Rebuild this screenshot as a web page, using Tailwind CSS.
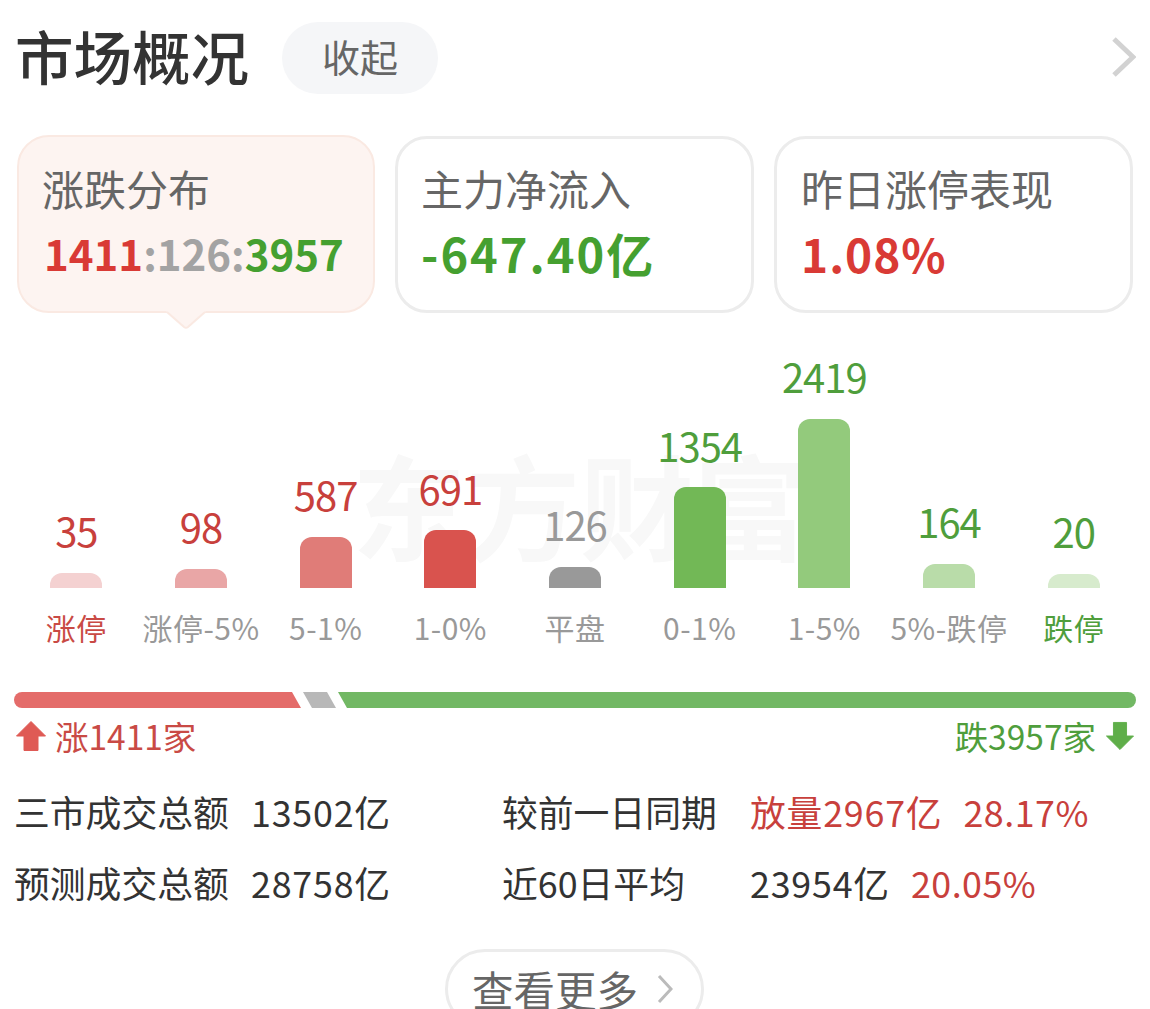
<!DOCTYPE html>
<html lang="zh-CN">
<head>
    <meta charset="UTF-8">
    <meta name="viewport" content="width=device-width, initial-scale=1.0">
    <title>市场概况</title>
    <script src="https://cdn.jsdelivr.net/npm/@tailwindcss/browser@4"></script>
</head>
<body class="font-['Noto_Sans_CJK_SC',sans-serif] bg-white">
<main class="h-[1009px] w-[1150px] overflow-hidden">

    <!-- Header -->
    <header class="flex items-center h-[72px] mt-[22px] pl-[15px] pr-[14px]">
        <h1 class="text-[58.5px] leading-[72px] font-medium text-[#333] mb-[6px]">市场概况</h1>
        <button class="ml-[33px] w-[156px] h-[72px] pb-[4px] rounded-[36px] bg-[#f5f6f8] text-[38px] leading-[68px] text-[#666]">收起</button>
        <svg class="ml-auto mb-[2px]" width="24" height="40" viewBox="0 0 24 40" fill="none"><path d="M2 2 L21 20 L2 38" stroke="#d2d2d2" stroke-width="5"/></svg>
    </header>

    <!-- Summary cards -->
    <section class="flex pl-[17px] mt-[41px]">
        <div class="relative w-[358px] h-[178px] rounded-[32px] border-2 border-[#fae9e2] bg-[#fdf4f1] pl-[23px] pt-[23px]">
            <div class="text-[42px] leading-[56px] text-[#666]">涨跌分布</div>
            <div class="mt-[11px] pl-[2px] text-[42px] leading-[52px] font-bold whitespace-nowrap"><span class="text-[#d93a35]">1411</span><span class="text-[#a3a3a3]">:126:</span><span class="text-[#45a030]">3957</span></div>
            <svg class="absolute left-[147px] top-[174px]" width="40" height="18" viewBox="0 0 40 18"><path d="M0 0 L40 0 L22 16 Q20 17.5 18 16 Z" fill="#fdf4f1"/><path d="M1 1 L18 16 Q20 17.5 22 16 L39 1" fill="none" stroke="#fae9e2" stroke-width="2"/></svg>
        </div>
        <div class="ml-[20px] w-[359px] h-[177px] mt-px rounded-[32px] border-[3px] border-[#ececec] pl-[23px] pt-[21px]">
            <div class="text-[42px] leading-[56px] text-[#666]">主力净流入</div>
            <div class="mt-[11px] text-[47px] leading-[52px] font-bold tracking-[2px] text-[#45a030] whitespace-nowrap">-647.40亿</div>
        </div>
        <div class="ml-[20px] w-[359px] h-[177px] mt-px rounded-[32px] border-[3px] border-[#ececec] pl-[24px] pt-[21px]">
            <div class="text-[42px] leading-[56px] text-[#666]">昨日涨停表现</div>
            <div class="mt-[11px] text-[46px] leading-[52px] font-bold tracking-[1px] text-[#d93a35] whitespace-nowrap">1.08%</div>
        </div>
    </section>

    <!-- Distribution chart -->
    <section class="relative mt-[38px] mx-[14px] w-[1122px]">
        <div class="absolute left-[338px] top-[82px] text-[114px] leading-[140px] font-bold text-[#f8f8f8] whitespace-nowrap">东方财富</div>
        <div class="relative grid grid-cols-9 items-end h-[237px]">
            <div class="flex flex-col items-center"><span class="text-[40px] leading-[40px] tracking-[-1px] mb-[23px] text-[#c8403c]">35</span><div class="w-[52px] h-[15px] rounded-t-[12px] bg-[#f4d1d1]"></div></div>
            <div class="flex flex-col items-center"><span class="text-[40px] leading-[40px] tracking-[-1px] mb-[23px] text-[#c8403c]">98</span><div class="w-[52px] h-[19px] rounded-t-[12px] bg-[#e9a6a6]"></div></div>
            <div class="flex flex-col items-center"><span class="text-[40px] leading-[40px] tracking-[-1px] mb-[23px] text-[#c8403c]">587</span><div class="w-[52px] h-[51px] rounded-t-[12px] bg-[#e07c78]"></div></div>
            <div class="flex flex-col items-center"><span class="text-[40px] leading-[40px] tracking-[-1px] mb-[22px] text-[#c8403c]">691</span><div class="w-[52px] h-[58px] rounded-t-[12px] bg-[#d9534e]"></div></div>
            <div class="flex flex-col items-center"><span class="text-[40px] leading-[40px] tracking-[-1px] mb-[23px] text-[#999]">126</span><div class="w-[52px] h-[21px] rounded-t-[12px] bg-[#999]"></div></div>
            <div class="flex flex-col items-center"><span class="text-[40px] leading-[40px] tracking-[-1px] mb-[22px] text-[#4f9e3c]">1354</span><div class="w-[52px] h-[101px] rounded-t-[12px] bg-[#72b856]"></div></div>
            <div class="flex flex-col items-center"><span class="text-[40px] leading-[40px] tracking-[-1px] mb-[23px] text-[#4f9e3c]">2419</span><div class="w-[52px] h-[169px] rounded-t-[12px] bg-[#93ca7c]"></div></div>
            <div class="flex flex-col items-center"><span class="text-[40px] leading-[40px] tracking-[-1px] mb-[23px] text-[#4f9e3c]">164</span><div class="w-[52px] h-[24px] rounded-t-[12px] bg-[#b9dca9]"></div></div>
            <div class="flex flex-col items-center"><span class="text-[40px] leading-[40px] tracking-[-1px] mb-[23px] text-[#4f9e3c]">20</span><div class="w-[52px] h-[14px] rounded-t-[12px] bg-[#d7ebcd]"></div></div>
        </div>
        <div class="relative grid grid-cols-9 mt-[18px] text-[30px] leading-[42px] tracking-[0.5px] text-[#999] text-center whitespace-nowrap">
            <span class="text-[#c94a45]">涨停</span>
            <span>涨停-5%</span>
            <span>5-1%</span>
            <span>1-0%</span>
            <span>平盘</span>
            <span>0-1%</span>
            <span>1-5%</span>
            <span>5%-跌停</span>
            <span class="text-[#4f9e3c]">跌停</span>
        </div>
    </section>

    <!-- Up / flat / down ratio bar -->
    <section class="mx-[14px] mt-[44px]">
        <svg class="block" width="1122" height="16" viewBox="0 0 1122 16">
            <path d="M8 0 L278 0 L287 16 L8 16 A8 8 0 0 1 8 0 Z" fill="#e46c6a"/>
            <path d="M289 0 L313 0 L322 16 L298 16 Z" fill="#b8b8b8"/>
            <path d="M324 0 L1114 0 A8 8 0 0 1 1114 16 L333 16 Z" fill="#72b864"/>
        </svg>
        <div class="flex justify-between items-center mt-[7px] h-[42px] text-[33.5px] leading-[42px]">
            <div class="flex items-center text-[#c94a45]">
                <svg class="ml-[2px] mr-[9px]" width="30" height="30" viewBox="0 0 30 30"><path d="M15 0.5 L29.5 15 L22 15 L22 29.5 L8 29.5 L8 15 L0.5 15 Z" fill="#df5a55" stroke="#df5a55" stroke-linejoin="round"/></svg>
                <span>涨1411家</span>
            </div>
            <div class="flex items-center text-[#4f9e3c]">
                <span>跌3957家</span>
                <svg class="ml-[10px] mr-[2px]" width="28" height="30" viewBox="0 0 30 30"><path d="M15 29.5 L29.5 15 L22 15 L22 0.5 L8 0.5 L8 15 L0.5 15 Z" fill="#5fae49" stroke="#5fae49" stroke-linejoin="round"/></svg>
            </div>
        </div>
    </section>

    <!-- Turnover stats -->
    <section class="mt-[28px] pl-[14px] text-[35.8px] leading-[52px] text-[#333] whitespace-nowrap">
        <div class="flex">
            <span class="w-[237px]">三市成交总额</span>
            <span class="w-[251px] tracking-[0.8px]">13502亿</span>
            <span class="w-[248px]">较前一日同期</span>
            <span class="tracking-[0.8px] text-[#c8403c]">放量2967亿</span>
            <span class="ml-[21px] tracking-[0.5px] text-[#c8403c]">28.17%</span>
        </div>
        <div class="flex mt-[19px]">
            <span class="w-[237px]">预测成交总额</span>
            <span class="w-[251px] tracking-[0.8px]">28758亿</span>
            <span class="w-[248px]">近60日平均</span>
            <span class="tracking-[0.8px]">23954亿</span>
            <span class="ml-[21px] tracking-[0.5px] text-[#c8403c]">20.05%</span>
        </div>
    </section>

    <!-- More button, cut off by the window edge -->
    <button class="flex items-center ml-[445px] mt-[41px] w-[259px] h-[80px] rounded-[40px] border-[3px] border-[#ececec] pl-[24px] text-[41.5px] leading-[76px] text-[#666]">
        查看更多
        <svg class="ml-[19px]" width="16" height="30" viewBox="0 0 16 30" fill="none"><path d="M2 2 L14 15 L2 28" stroke="#bbb" stroke-width="3"/></svg>
    </button>
</main>
</body>
</html>
